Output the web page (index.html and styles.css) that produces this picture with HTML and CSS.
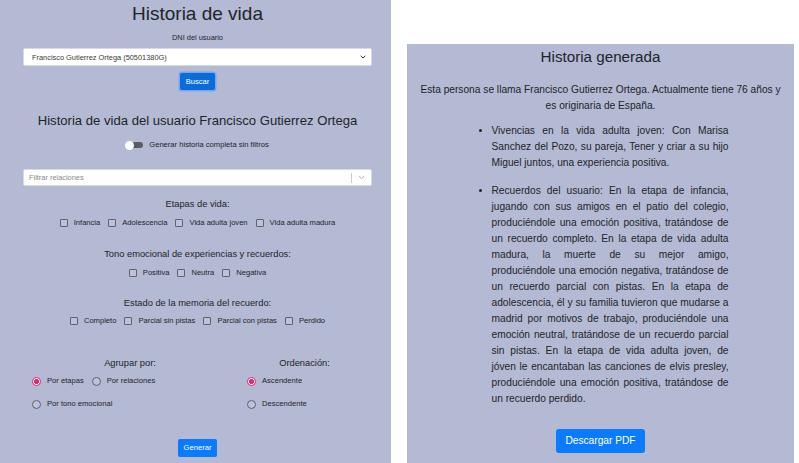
FILE: index.html
```html
<!DOCTYPE html>
<html lang="es">
<head>
<meta charset="utf-8">
<title>Historia de vida</title>
<link rel="stylesheet" href="styles.css">
</head>
<body>
<div class="page">
  <section class="panel left">
    <h1 class="title">Historia de vida</h1>
    <div class="label">DNI del usuario</div>
    <div class="select">
      <span>Francisco Gutierrez Ortega (50501380G)</span>
      <svg class="chev" width="6" height="4" viewBox="0 0 6 4"><path d="M0.7 0.8 L3 3 L5.3 0.8" fill="none" stroke="#333" stroke-width="1"/></svg>
    </div>
    <div class="center btn-row-1"><button class="btn btn-focus">Buscar</button></div>
    <h2 class="subtitle">Historia de vida del usuario Francisco Gutierrez Ortega</h2>
    <div class="toggle-row">
      <span class="switch"><span class="knob"></span></span>
      <span>Generar historia completa sin filtros</span>
    </div>
    <div class="multi">
      <span class="ph">Filtrar relaciones</span>
      <span class="sep"></span>
      <svg class="chev2" width="7" height="5" viewBox="0 0 7 5"><path d="M0.8 1 L3.5 3.6 L6.2 1" fill="none" stroke="#b3b3b3" stroke-width="1"/></svg>
    </div>

    <h3 class="group-title g1">Etapas de vida:</h3>
    <div class="checks c1">
      <label class="check"><span class="box"></span>Infancia</label>
      <label class="check"><span class="box"></span>Adolescencia</label>
      <label class="check"><span class="box"></span>Vida adulta joven</label>
      <label class="check"><span class="box"></span>Vida adulta madura</label>
    </div>

    <h3 class="group-title g2">Tono emocional de experiencias y recuerdos:</h3>
    <div class="checks c2">
      <label class="check"><span class="box"></span>Positiva</label>
      <label class="check"><span class="box"></span>Neutra</label>
      <label class="check"><span class="box"></span>Negativa</label>
    </div>

    <h3 class="group-title g3">Estado de la memoria del recuerdo:</h3>
    <div class="checks c3">
      <label class="check"><span class="box"></span>Completo</label>
      <label class="check"><span class="box"></span>Parcial sin pistas</label>
      <label class="check"><span class="box"></span>Parcial con pistas</label>
      <label class="check"><span class="box"></span>Perdido</label>
    </div>

    <div class="options">
      <div class="opt-col">
        <h3 class="group-title">Agrupar por:</h3>
        <div class="radio-row">
          <label class="radio"><span class="dot on"></span>Por etapas</label>
          <label class="radio"><span class="dot"></span>Por relaciones</label>
        </div>
        <div class="radio-row second">
          <label class="radio"><span class="dot"></span>Por tono emocional</label>
        </div>
      </div>
      <div class="opt-col">
        <h3 class="group-title">Ordenación:</h3>
        <div class="radio-row">
          <label class="radio"><span class="dot on"></span>Ascendente</label>
        </div>
        <div class="radio-row second">
          <label class="radio"><span class="dot"></span>Descendente</label>
        </div>
      </div>
    </div>
    <div class="center btn-row-2"><button class="btn">Generar</button></div>
  </section>

  <section class="panel right">
    <h2 class="story-title">Historia generada</h2>
    <p class="intro">Esta persona se llama Francisco Gutierrez Ortega. Actualmente tiene 76 años y es originaria de España.</p>
    <ul class="story">
      <li>Vivencias en la vida adulta joven: Con Marisa Sanchez del Pozo, su pareja, Tener y criar a su hijo Miguel juntos, una experiencia positiva.</li>
      <li>Recuerdos del usuario: En la etapa de infancia, jugando con sus amigos en el patio del colegio, produciéndole una emoción positiva, tratándose de un recuerdo completo. En la etapa de vida adulta madura, la muerte de su mejor amigo, produciéndole una emoción negativa, tratándose de un recuerdo parcial con pistas. En la etapa de adolescencia, él y su familia tuvieron que mudarse a madrid por motivos de trabajo, produciéndole una emoción neutral, tratándose de un recuerdo parcial sin pistas. En la etapa de vida adulta joven, de jóven le encantaban las canciones de elvis presley, produciéndole una emoción positiva, tratándose de un recuerdo perdido.</li>
    </ul>
    <div class="center"><button class="btn btn-pdf">Descargar PDF</button></div>
  </section>
</div>
</body>
</html>
```

FILE: styles.css
```css
* { box-sizing: border-box; }

html, body {
  margin: 0;
  padding: 0;
  background: #ffffff;
  font-family: "Liberation Sans", Arial, Helvetica, sans-serif;
  color: #212529;
}

.page {
  display: flex;
  align-items: flex-start;
  gap: 16px;
  height: 463px;
  overflow: hidden;
}

.panel {
  background: #b4b9d4;
  overflow: hidden;
}

.left {
  width: 391px;
  height: 463px;
  padding: 3px 19px 0 23px;
}

.right {
  width: 387px;
  height: 419px;
  margin-top: 44px;
  padding: 0 10px;
}

.center {
  display: flex;
  justify-content: center;
}

/* ---------- left panel ---------- */
.title {
  margin: 0;
  font-size: 19px;
  line-height: 22px;
  font-weight: 400;
  text-align: center;
}

.label {
  margin-top: 8px;
  font-size: 7.4px;
  line-height: 10px;
  text-align: center;
}

.select {
  margin-top: 5px;
  height: 18px;
  background: #ffffff;
  border: 1px solid #d8dae3;
  border-radius: 2px;
  display: flex;
  align-items: center;
  justify-content: space-between;
  padding: 0 5px 0 8px;
  font-size: 7.4px;
  color: #3a3a3a;
}

.btn {
  border: 0;
  border-radius: 2px;
  background: #0a7bff;
  color: #ffffff;
  font-family: inherit;
  font-size: 7.6px;
  line-height: 10px;
  padding: 0 6px;
  height: 18px;
  cursor: pointer;
}

.btn-row-1 { margin-top: 7px; }
.btn-focus {
  height: 17px;
  background: #0a6bd9;
  box-shadow: 0 0 0 1.5px rgba(70, 150, 255, 0.55);
}

.subtitle {
  margin: 23px 0 0;
  font-size: 13.1px;
  line-height: 16px;
  font-weight: 400;
  text-align: center;
}

.toggle-row {
  margin-top: 11px;
  display: flex;
  justify-content: center;
  align-items: center;
  gap: 6px;
  font-size: 7.6px;
  line-height: 10px;
}

.switch {
  position: relative;
  width: 17px;
  height: 6px;
  border-radius: 3px;
  background: #5a5c66;
}

.knob {
  position: absolute;
  left: -1px;
  top: -1.5px;
  width: 9px;
  height: 9px;
  border-radius: 50%;
  background: #ffffff;
}

.multi {
  margin-top: 19px;
  height: 17px;
  background: #ffffff;
  border: 1px solid #d8dae3;
  border-radius: 2px;
  display: flex;
  align-items: center;
  padding: 0 6px 0 5px;
  font-size: 7.4px;
}

.ph {
  flex: 1;
  color: #8a8a8a;
}

.sep {
  width: 1px;
  height: 10px;
  background: #cccccc;
  margin-right: 6px;
}

.group-title {
  margin: 0;
  font-size: 9.3px;
  line-height: 12px;
  font-weight: 400;
  text-align: center;
}

.g1 { margin-top: 12px; }
.g2 { margin-top: 20px; }
.g3 { margin-top: 19px; }

.checks {
  display: flex;
  justify-content: center;
  gap: 8px;
  font-size: 7.6px;
  line-height: 10px;
}

.c1 { margin-top: 8px; }
.c2 { margin-top: 8px; }
.c3 { margin-top: 7px; }

.check {
  display: inline-flex;
  align-items: center;
  gap: 6px;
}

.box {
  width: 8px;
  height: 8px;
  border: 1px solid #5f6270;
  border-radius: 1px;
  background: rgba(255, 255, 255, 0.12);
}

.options {
  margin-top: 31px;
  display: grid;
  grid-template-columns: 214px 135px;
}

.opt-col .radio-row {
  margin-top: 7px;
  padding-left: 9px;
  display: flex;
  gap: 8px;
  font-size: 7.6px;
  line-height: 10px;
}

.opt-col .radio-row.second { margin-top: 13px; }

.opt-col:last-child .radio-row { padding-left: 10px; }

.radio {
  display: inline-flex;
  align-items: center;
  gap: 6px;
}

.dot {
  width: 9px;
  height: 9px;
  border-radius: 50%;
  border: 1px solid #5f6270;
  background: rgba(255, 255, 255, 0.12);
}

.dot.on {
  border-color: #e3266f;
  background: radial-gradient(circle, #e3266f 0 2.2px, #ffffff 2.6px 100%);
}

.btn-row-2 { margin-top: 30px; }

/* ---------- right panel ---------- */
.story-title {
  margin: 4px 0 0;
  font-size: 15.2px;
  line-height: 18px;
  font-weight: 400;
  text-align: center;
}

.intro {
  margin: 16px 0 0;
  font-size: 10.2px;
  line-height: 16px;
  text-align: center;
}

.story {
  width: 256px;
  margin: 9px auto 0;
  padding-left: 19px;
  font-size: 10.2px;
  line-height: 16px;
  text-align: justify;
}

.story li + li { margin-top: 12px; }

.right .center { margin-top: 22px; }

.btn-pdf {
  height: 24px;
  font-size: 10.2px;
  padding: 0 9px;
  border-radius: 3px;
}
```
